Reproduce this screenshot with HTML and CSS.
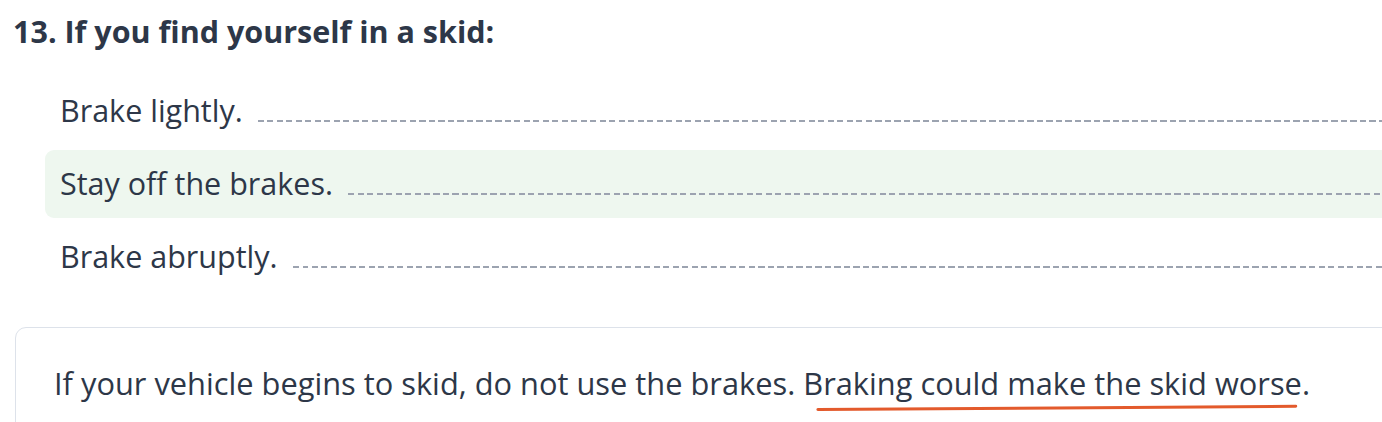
FILE: index.html
```html
<!DOCTYPE html>
<html lang="en">
<head>
<meta charset="utf-8">
<title>Question 13</title>
<link rel="stylesheet" href="styles.css">
</head>
<body>
<div class="page">
  <h2 class="question">13. If you find yourself in a skid:</h2>
  <ul class="options">
    <li class="option"><span class="option-text">Brake lightly.</span><span class="leader"></span></li>
    <li class="option option-correct"><span class="option-text">Stay off the brakes.</span><span class="leader"></span></li>
    <li class="option"><span class="option-text">Brake abruptly.</span><span class="leader"></span></li>
  </ul>
  <div class="explanation">
    <p class="explanation-text">If your vehicle begins to skid, do not use the brakes. <span class="highlight">Braking could make the skid worse<svg class="underline" viewBox="0 0 100 8" preserveAspectRatio="none" aria-hidden="true"><path d="M1 5.5 C 30 4.8, 70 3.2, 99 2.2" fill="none" stroke="#e35a2c" stroke-width="3" stroke-linecap="round" vector-effect="non-scaling-stroke"/></svg></span>.</p>
  </div>
</div>
</body>
</html>
```
FILE: styles.css
```css
html, body {
  margin: 0;
  padding: 0;
  background: #ffffff;
}
body {
  overflow: hidden;
  font-family: "Open Sans", "Noto Sans", sans-serif;
  color: #2d3748;
}
.page {
  padding: 11px 0 0 13px;
  margin-right: -40px;
}
.question {
  margin: 0;
  font-size: 30.5px;
  line-height: 40px;
  font-weight: 700;
  color: #2d3748;
}
.options {
  list-style: none;
  margin: 26px 0 0 0;
  padding: 0 0 0 32px;
  display: flex;
  flex-direction: column;
  gap: 5px;
}
.option {
  display: flex;
  align-items: baseline;
  gap: 15px;
  padding: 12px 0 14px 15px;
  border-radius: 9px;
  font-size: 30.5px;
  line-height: 42px;
}
.option-correct {
  background: #eef7ef;
}
.option-text {
  white-space: nowrap;
}
.leader {
  flex: 1;
  height: 2px;
  margin-bottom: -1px;
  background-image: repeating-linear-gradient(90deg, #9ca3b0 0, #9ca3b0 6px, transparent 6px, transparent 9.5px);
}
.explanation {
  margin: 36px 0 0 2px;
  border: 1.5px solid #dde2ea;
  border-radius: 11px;
  padding: 31px 0 40px 38px;
}
.explanation-text {
  margin: 0;
  font-size: 30.8px;
  line-height: 48px;
  white-space: nowrap;
}
.highlight {
  position: relative;
}
.underline {
  position: absolute;
  left: 10px;
  top: calc(100% + 0px);
  width: calc(100% - 11px);
  height: 8px;
  overflow: visible;
}
```
